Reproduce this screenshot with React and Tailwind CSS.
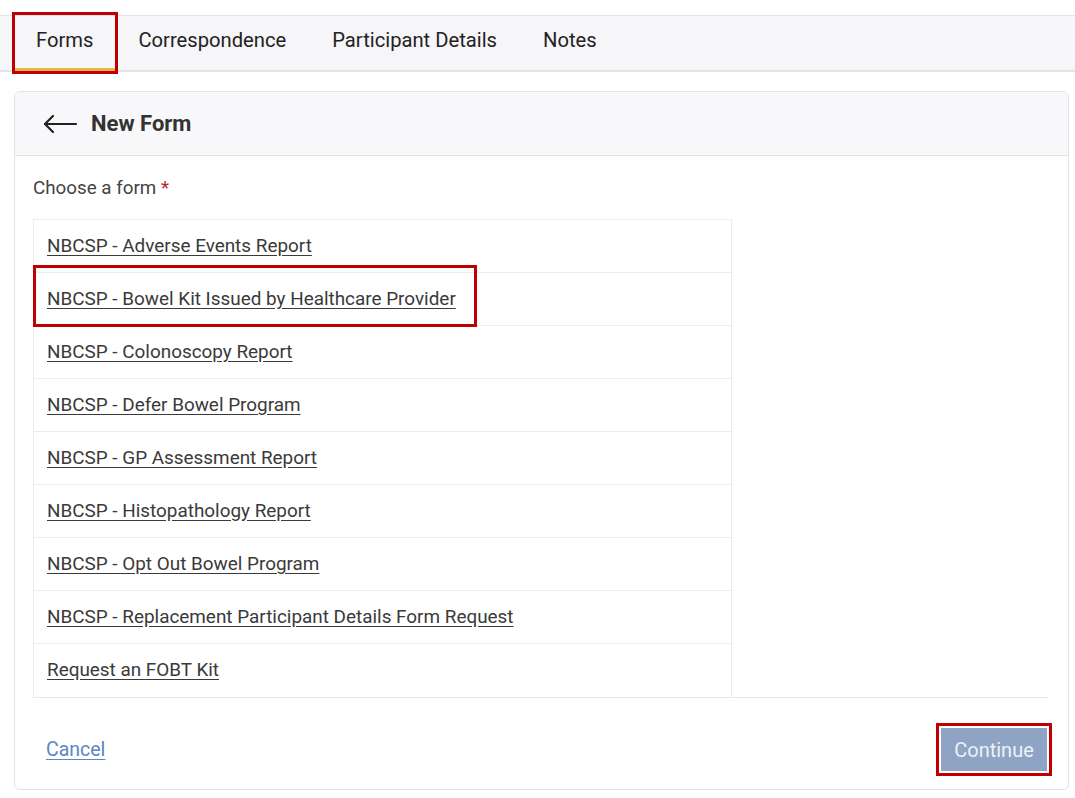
const FORMS = [
  "NBCSP - Adverse Events Report",
  "NBCSP - Bowel Kit Issued by Healthcare Provider",
  "NBCSP - Colonoscopy Report",
  "NBCSP - Defer Bowel Program",
  "NBCSP - GP Assessment Report",
  "NBCSP - Histopathology Report",
  "NBCSP - Opt Out Bowel Program",
  "NBCSP - Replacement Participant Details Form Request",
  "Request an FOBT Kit",
];

const TABS = ["Forms", "Correspondence", "Participant Details", "Notes"];

export default function App() {
  return (
    <div
      className="w-[1075px] h-[798px] bg-white text-[#333] overflow-hidden"
      style={{ fontFamily: "Roboto, 'Noto Sans', Arial, sans-serif" }}
    >
      {/* Tabs */}
      <div className="mt-[15px] h-[57px] bg-[#f6f5f8] border-t border-b-2 border-[#e4e3e7] flex items-stretch pl-[15px]">
        {TABS.map((t, i) => (
          <div
            key={t}
            className={
              i === 0
                ? "relative flex items-center pb-[4px] pl-[21px] pr-[22px] border-b-4 border-[#e9b44c] -mb-[2px]"
                : "relative flex items-center pb-[6px] px-[23px]"
            }
          >
            <span className="text-[20.2px] text-[#222] leading-none">{t}</span>
            {i === 0 && (
              <div className="absolute -left-[3px] -right-[3px] -top-[4px] -bottom-[6px] border-[3px] border-[#c00000]" />
            )}
          </div>
        ))}
      </div>

      {/* Card */}
      <div className="mx-[14px] mt-[19px] w-[1055px] h-[699px] border border-[#e3e2e6] rounded-[6px] overflow-hidden flex flex-col">
        <div className="h-[64px] bg-[#f8f7f9] border-b border-[#e3e2e6] flex items-center pl-[27px] gap-[13px]">
          <svg width="36" height="20" viewBox="0 0 36 20" fill="none" stroke="#222" strokeWidth="2.2" strokeLinecap="round" strokeLinejoin="round">
            <path d="M34 10H3" />
            <path d="M11 2L3 10l8 8" />
          </svg>
          <span className="text-[22px] font-bold text-[#333]">New Form</span>
        </div>

        <div className="flex-1 px-[18px] pt-[21px] flex flex-col">
          <div className="text-[18.8px] text-[#444] leading-[22px]">
            Choose a form <span className="text-[#b02a2a]">*</span>
          </div>

          <div className="mt-[20px] border-b border-[#e8e7eb] mr-[2px]">
            <div className="w-[699px] border border-b-0 border-[#ecebef]">
              {FORMS.map((f, i) => (
                <div
                  key={f}
                  className={
                    "relative h-[53px] flex items-center pl-[13px] " +
                    (i < FORMS.length - 1 ? "border-b border-[#ecebef]" : "")
                  }
                >
                  <a className="text-[18.9px] text-[#3a3a3a] underline underline-offset-[3px] cursor-pointer">
                    {f}
                  </a>
                  {i === 1 && (
                    <div className="absolute -left-px top-[-8px] w-[444px] h-[62px] border-[3px] border-[#c00000]" />
                  )}
                </div>
              ))}
            </div>
          </div>

          <div className="flex items-center justify-between mt-[25px] pl-[13px] pr-0 -mr-[2px]">
            <a className="text-[19.5px] text-[#5a86c5] underline underline-offset-[3px] cursor-pointer">Cancel</a>
            <div className="border-[3px] border-[#c00000] p-[2px]">
              <button className="w-[106px] h-[43px] bg-[#8fa3c4] text-[#eef1f8] text-[20px]">Continue</button>
            </div>
          </div>
        </div>
      </div>
    </div>
  );
}
